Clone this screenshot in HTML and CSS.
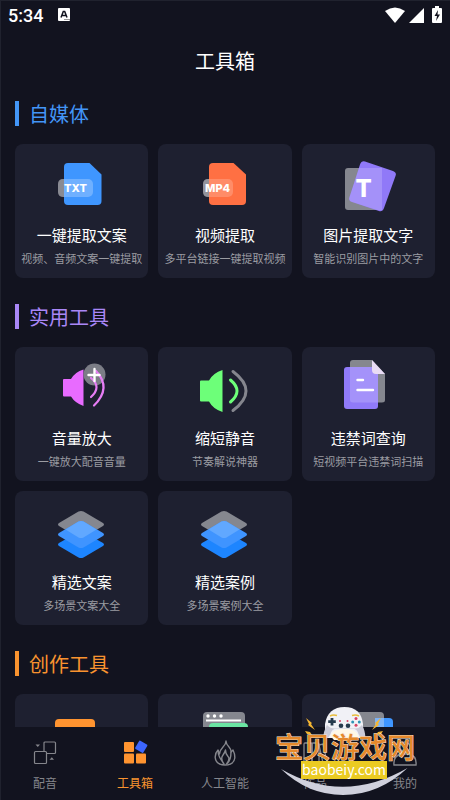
FILE: index.html
```
<!DOCTYPE html>
<html lang="zh-CN">
<head>
    <meta charset="UTF-8">
    <meta name="viewport" content="width=device-width, initial-scale=1.0">
    <title>工具箱</title>
    <link rel="stylesheet" href="styles.css">
</head>
<body>
    <div class="app">
        <div class="status-bar">
            <span class="time">5:34</span>
            <svg class="input-icon" width="12" height="14" viewBox="0 0 12 14"><rect width="12" height="13" rx="1" fill="#fff"/><path d="M3 9.500 5.300 3.500h1.400L9 9.500M4 7.500h4" fill="none" stroke="#12131f" stroke-width="1.500"/><path d="M6 11.500h6" stroke="#999" stroke-width="1"/></svg>
            <div class="status-icons">
                <svg width="20" height="18" viewBox="0 0 20 18"><path d="M0 5Q10-2 20 5L10 17Z" fill="#fff"/></svg>
                <svg width="15" height="18" viewBox="0 0 15 18"><path d="M15 2v15H0Z" fill="#fff"/></svg>
                <svg class="battery" width="10" height="18" viewBox="0 0 10 18"><path d="M3 0h4v2h2q1 0 1 1v13q0 1-1 1H1q-1 0-1-1V3q0-1 1-1h2Z" fill="#fff"/><path d="M6 4 2.500 10H5l-1 5 4-6.500H5.500Z" fill="#12131f"/></svg>
            </div>
        </div>
        <h1 class="page-title">工具箱</h1>

        <main class="content">
            <section class="section">
                <h2 class="section-title blue">自媒体</h2>
                <div class="grid">
                    <a class="card" href="#">
                        <svg class="card-icon" viewBox="0 0 50 50">
                            <path d="M11 3h21.500L44.500 14.500V41q0 4-4 4H11q-4 0-4-4V7q0-4 4-4Z" fill="#3f96ff"/>
                            <rect x="1" y="19" width="35" height="18" rx="5" fill="#fff" fill-opacity=".25"/>
                            <path d="M7 19H6q-5 0-5 5v8q0 5 5 5h1Z" fill="#fff" fill-opacity=".3"/>
                            <text class="file-label" x="7" y="32">TXT</text>
                        </svg>
                        <h3>一键提取文案</h3>
                        <p>视频、音频文案一键提取</p>
                    </a>
                    <a class="card" href="#">
                        <svg class="card-icon" viewBox="0 0 50 50">
                            <path d="M13 3h20.500L46 14.500V41q0 4-4 4H13q-4 0-4-4V7q0-4 4-4Z" fill="#ff7043"/>
                            <rect x="3" y="19" width="30" height="18" rx="5" fill="#fff" fill-opacity=".2"/>
                            <path d="M9 19H8q-5 0-5 5v8q0 5 5 5h1Z" fill="#fff" fill-opacity=".4"/>
                            <text class="file-label" x="5" y="32">MP4</text>
                        </svg>
                        <h3>视频提取</h3>
                        <p>多平台链接一键提取视频</p>
                    </a>
                    <a class="card" href="#">
                        <svg class="card-icon" viewBox="0 0 50 50">
                            <rect x="2" y="8" width="37" height="42" rx="3" fill="#85878f"/>
                            <path d="M22 1.500 50 11q4 1.500 2.500 5L41 48q-1.500 4-5 3L9 42q-4-1.500-2.500-5L17 4.500q1.500-4 5-3Z" fill="#9079f8"/>
                            <path d="M16 8h23v42h-5L9 42q-4-1.500-2.500-5Z" fill="#fff" fill-opacity=".18"/>
                            <text class="letter" x="12.500" y="37">T</text>
                        </svg>
                        <h3>图片提取文字</h3>
                        <p>智能识别图片中的文字</p>
                    </a>
                </div>
            </section>

            <section class="section">
                <h2 class="section-title purple">实用工具</h2>
                <div class="grid">
                    <a class="card" href="#">
                        <svg class="card-icon" viewBox="0 0 50 50">
                            <path d="M7 16h7Q18 9 26.500 6.500V43Q18 40 14 33.500H7q-1 0-1-1V17q0-1 1-1Z" fill="#e86bff"/>
                            <circle cx="37.500" cy="11.500" r="11" fill="#7b7d86"/>
                            <path d="M34 15Q45 24 34 34M39 8q16 17-2 34.500" fill="none" stroke="#e77df5" stroke-width="2.200" stroke-linecap="round"/>
                            <path d="M37.500 6v12M31.500 12h11" stroke="#fff" stroke-width="2.400" stroke-linecap="round"/>
                        </svg>
                        <h3>音量放大</h3>
                        <p>一键放大配音音量</p>
                    </a>
                    <a class="card" href="#">
                        <svg class="card-icon" viewBox="0 0 50 50">
                            <path d="M1 17.500h8Q13 10 22.500 7v42Q13 46 9 38.500H1q-1 0-1-1v-19q0-1 1-1Z" fill="#6dff79"/>
                            <path d="M30.500 17q13 11 0 22" fill="none" stroke="#6dff79" stroke-width="3" stroke-linecap="round"/>
                            <path d="M33 8.500q26 19.500 0 39" fill="none" stroke="#85868e" stroke-width="3" stroke-linecap="round"/>
                        </svg>
                        <h3>缩短静音</h3>
                        <p>节奏解说神器</p>
                    </a>
                    <a class="card" href="#">
                        <svg class="card-icon" viewBox="0 0 50 50">
                            <path d="M10-3h19L42 11v26q0 2.500-3 2.500H10q-3 0-3-2.500V0q0-3 3-3Z" fill="#85878f"/>
                            <rect x="1" y="4" width="34" height="42" rx="3" fill="#907af9"/>
                            <path d="M7 4h25q3 0 3 3v32.500H10q-3 0-3-2.500Z" fill="#fff" fill-opacity=".18"/>
                            <path d="M29-3 42 11h-9q-4 0-4-4Z" fill="#e9dcf5"/>
                            <path d="M14.500 17H20M14.500 27H30" stroke="#fff" stroke-width="2.400" stroke-linecap="round"/>
                        </svg>
                        <h3>违禁词查询</h3>
                        <p>短视频平台违禁词扫描</p>
                    </a>
                    <a class="card" href="#">
                        <svg class="card-icon" viewBox="0 0 50 50">
                            <g id="layers">
                                <path d="M21.500 25 2 36q-2 1.500 0 3l19.500 11.500q2.500 1.200 5 0L46 39q2-1.500 0-3L26.500 25q-2.500-1.200-5 0Z" fill="#1d85ff"/>
                                <path d="M21.500 4.500 2 16q-2 1.500 0 3l19.500 11.500q2.500 1.200 5 0L46 19q2-1.500 0-3L26.500 4.500q-2.500-1.200-5 0Z" fill="#85878f"/>
                                <path d="M21.500 14.500 2 26q-2 1.500 0 3l19.500 11.500q2.500 1.200 5 0L46 29q2-1.500 0-3L26.500 14.500q-2.500-1.200-5 0Z" fill="#3f94ff"/>
                                <path d="M21.500 14.500 8.500 22.500l13 8q2.500 1.200 5 0l13-8-13-8q-2.500-1.200-5 0Z" fill="#61a8ff"/>
                            </g>
                        </svg>
                        <h3>精选文案</h3>
                        <p>多场景文案大全</p>
                    </a>
                    <a class="card" href="#">
                        <svg class="card-icon" viewBox="0 0 50 50"><use href="#layers"/></svg>
                        <h3>精选案例</h3>
                        <p>多场景案例大全</p>
                    </a>
                </div>
            </section>

            <section class="section">
                <h2 class="section-title orange">创作工具</h2>
                <div class="grid">
                    <a class="card" href="#" aria-label="创作">
                        <svg class="card-icon" viewBox="0 0 50 50"><rect x="-2" y="9" width="40" height="34" rx="4" fill="#ff9430"/></svg>
                    </a>
                    <a class="card" href="#" aria-label="网页">
                        <svg class="card-icon" viewBox="0 0 50 50">
                            <rect x="3" y="2" width="42" height="38" rx="4" fill="#85878f"/>
                            <g fill="#fff"><circle cx="8" cy="6" r="1.700"/><circle cx="14.500" cy="6" r="1.700"/><circle cx="21" cy="6" r="1.700"/></g>
                            <path d="M6 10.500h35" stroke="#fff" stroke-width="2"/>
                            <rect x="9" y="13" width="39" height="34" rx="4" fill="#6be6a4"/>
                        </svg>
                    </a>
                    <a class="card" href="#" aria-label="图片">
                        <svg class="card-icon" viewBox="0 0 50 50">
                            <rect x="12" y="8" width="38" height="36" rx="4" fill="#3f96ff"/>
                            <rect x="0" y="2" width="41" height="34" rx="4" fill="#85878f"/>
                            <path d="M32 8h9v20h-9Z" fill="#7fb4f5"/>
                        </svg>
                    </a>
                </div>
            </section>
        </main>

        <nav class="tab-bar">
            <a class="tab" href="#">
                <svg viewBox="0 0 24 24" fill="none" stroke="#85868c" stroke-width="1.200"><rect x="11" y="2" width="11.500" height="11.500" rx="1"/><rect x="1.500" y="11.500" width="12" height="12" rx="1" fill="#12131f"/><path d="M2.500 4.500h4.500l-2.200 2.500ZM16.500 19.800H21l-2.200-2.500Z" fill="#85868c" stroke="none"/></svg>
                <span>配音</span>
            </a>
            <a class="tab active" href="#">
                <svg viewBox="0 0 24 24" fill="#ff9430"><rect x="1" y="2" width="10" height="10" rx="1"/><rect x="1" y="13.500" width="10" height="10" rx="1"/><rect x="13" y="13.500" width="10" height="10" rx="1"/><rect x="13.500" y="2" width="9.500" height="9.500" rx="1" fill="#3c66ff" transform="rotate(30 18.250 6.750)"/></svg>
                <span>工具箱</span>
            </a>
            <a class="tab" href="#">
                <svg viewBox="0 0 24 24" fill="none" stroke="#85868c" stroke-width="1.400" stroke-linejoin="round"><path d="M13 1Q13 4 16 7q2 2 2 5l2-2q2 4 1.800 8-.8 7-9.800 7T2.200 17.500Q2 13 5 10l1.500 4Q7 10 10 7q3-3 3-6Z"/><path d="M5 10q0 4 1.500 7T11 24q-4-5-1-9 2-3 2.500-5 0 4 2.500 6.500t-1.500 7.500Q18 21 18 12"/></svg>
                <span>人工智能</span>
            </a>
            <a class="tab" href="#">
                <svg viewBox="0 0 24 24" fill="none" stroke="#85868c" stroke-width="1.300"><rect x="1" y="3" width="8" height="20" rx="1"/><rect x="9" y="3" width="7" height="20" rx="1"/><path d="m16 5 4-1 4 18-4 1Z"/></svg>
                <span>作品</span>
            </a>
            <a class="tab" href="#">
                <svg viewBox="0 0 24 24" fill="none" stroke="#85868c" stroke-width="1.400"><circle cx="12" cy="7" r="5"/><path d="M1 25q-1-9 7-11h8q8 2 7 11Z"/></svg>
                <span>我的</span>
            </a>
        </nav>

        <!-- site badge over the bottom right corner -->
        <svg class="site-badge" viewBox="0 0 150 100">
            <path d="M11 69q62 36 126.500-1Q109 95 73 95 38 95 11 69Z" fill="#cfd0dc"/>
            <path d="M55 24Q58 7 74.500 7T93 24v14H55Z" fill="#f1f1f6"/>
            <path d="M57 25q-4 7-3.500 13 4 2 7-4 1-4 4-5h20q3 1 4 5 3 6 7 4-.5-8-3.500-13-3 3.500-7 3.500H65q-5 0-8-3.500Z" fill="#cbcbd8"/>
            <path d="M60.500 36q2-7 14-7t14 7l-3 4H64Z" fill="#fff8e6"/>
            <path d="M60 16q3-1.500 7-.5M82 15.500q4-1 7 .5" fill="none" stroke="#e8bd3c" stroke-width="1.500"/>
            <path d="M62 18v7.500M58.200 21.700h7.600" stroke="#263a4d" stroke-width="2.800"/>
            <g fill="#263a4d"><circle cx="71" cy="25.700" r="2.300"/><circle cx="78" cy="25.700" r="2.300"/></g>
            <g fill="#d64264"><circle cx="70" cy="21" r="1"/><circle cx="77.500" cy="21" r="1"/><circle cx="86" cy="18.500" r="1.500"/><circle cx="86" cy="25.300" r="1.500"/></g>
            <g fill="#2d93b5"><circle cx="82.700" cy="22" r="1.500"/><circle cx="89.300" cy="22" r="1.500"/></g>
            <path d="m36 18 6 5-1 1 4 6-7-5 1-1ZM35 31l5 1 2 3-5-1ZM111 18l-6 5 1 1-4 6 7-5-1-1ZM113 31l-5 1-2 3 5-1Z" fill="#f5b632"/>
            <rect x="31" y="61" width="86" height="18" fill="#ebcb22"/>
            <text class="badge-name" x="75" y="58">宝贝游戏网</text>
            <text class="badge-url" x="74" y="75">baobeiy.com</text>
        </svg>
    </div>
</body>
</html>
```

FILE: styles.css
```
* {
    box-sizing: border-box;
}

body {
    margin: 0;
    background-color: #12131f;
    color: #fff;
    font-family: "Noto Sans CJK SC", sans-serif;
}

h1, h2, h3, p {
    margin: 0;
    font-weight: 400;
}

a {
    color: inherit;
    text-decoration: none;
}

.app {
    position: relative;
    display: flex;
    flex-direction: column;
    height: 100vh;
    overflow: hidden;
    box-shadow: inset 1px 1px #20222e;
}

/* Status bar */
.status-bar {
    display: flex;
    align-items: center;
    height: 30px;
    padding: 0 8px;
}

.time {
    font: 500 18px Roboto, sans-serif;
}

.input-icon {
    margin-left: 15px;
}

.status-icons {
    display: flex;
    gap: 4px;
    margin-left: auto;
}

.battery {
    margin-left: 4px;
}

.page-title {
    margin-top: 16px;
    font-size: 20px;
    line-height: 30px;
    text-align: center;
}

/* Tool sections */
.content {
    flex: 1;
    min-height: 0;
    margin-top: 15px;
    padding: 10px 15px 0;
    overflow-y: auto;
    scrollbar-width: none;
}

.section {
    margin-bottom: 26px;
}

.section-title {
    margin-bottom: 18px;
    padding-left: 10px;
    border-left: 4px solid;
    font-size: 20px;
    line-height: 25px;
}

.blue { color: #4396f7; }
.purple { color: #a987f7; }
.orange { color: #f9932f; }

.grid {
    display: grid;
    grid-template-columns: repeat(3, 1fr);
    gap: 10px;
}

.card {
    display: flex;
    flex-direction: column;
    align-items: center;
    min-height: 134px;
    padding: 16px 0 12px;
    border-radius: 8px;
    background-color: #1e2030;
    white-space: nowrap;
}

.card-icon {
    width: 50px;
    height: 50px;
    overflow: visible;
}

.card h3 {
    margin-top: 14px;
    font-size: 15px;
    line-height: 22px;
}

.card p {
    margin-top: 4px;
    color: #9b9ca2;
    font-size: 11px;
    line-height: 16px;
}

.file-label {
    fill: #fff;
    font: 800 11px Inter, sans-serif;
}

.letter {
    fill: #fff;
    font: 800 24px Inter, sans-serif;
}

/* Bottom tabs */
.tab-bar {
    display: flex;
    height: 73px;
    padding-top: 13px;
}

.tab {
    display: flex;
    flex: 1;
    flex-direction: column;
    align-items: center;
    gap: 11px;
    color: #85868c;
    font-size: 12px;
    line-height: 16px;
}

.tab svg {
    width: 24px;
    height: 24px;
    overflow: visible;
}

.tab.active {
    color: #f9932f;
}

/* Site badge */
.site-badge {
    position: absolute;
    right: 30px;
    bottom: 0;
    width: 150px;
    height: 100px;
    pointer-events: none;
}

.badge-name {
    fill: #e5892b;
    stroke: #f6e5d2;
    stroke-width: 1px;
    paint-order: stroke;
    font-size: 28px;
    font-weight: 500;
    text-anchor: middle;
}

.badge-url {
    fill: #fff;
    font-size: 14px;
    font-weight: 400;
    text-anchor: middle;
}
```
